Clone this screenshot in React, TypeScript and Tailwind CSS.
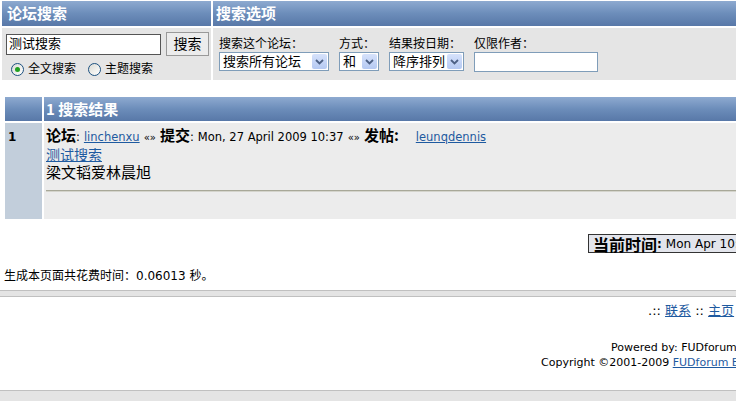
import React from "react";

const cjk = "font-['Tahoma','DejaVu_Sans','Noto_Sans_CJK_SC',sans-serif]";
const head = "bg-gradient-to-b from-[#8eaad0] via-[#6c8dba] to-[#5878a8] text-white font-bold text-[15px] font-['Noto_Sans_CJK_SC',serif]";

function Arrow() {
  return (
    <span className="flex h-[15px] w-[15px] items-center justify-center rounded-[2px] bg-gradient-to-b from-[#d6e2fb] to-[#b5c9f2]">
      <svg width="9" height="6" viewBox="0 0 9 6">
        <path d="M1 1l3.5 3.5L8 1" fill="none" stroke="#4d6185" strokeWidth="1.8" />
      </svg>
    </span>
  );
}

function Select({ label, w }: { label: string; w: string }) {
  return (
    <div className={`flex h-[19px] items-center justify-between border border-[#7f9db9] bg-white pl-[3px] pr-[1px] text-[13px] ${w}`}>
      <span>{label}</span>
      <Arrow />
    </div>
  );
}

function Radio({ on }: { on?: boolean }) {
  return (
    <span className="flex h-[13px] w-[13px] items-center justify-center rounded-full border border-[#1c5180] bg-gradient-to-br from-[#dcdcd5] to-white">
      {on && <span className="h-[5px] w-[5px] rounded-full bg-[#21a121]" />}
    </span>
  );
}

export default function App() {
  return (
    <div className={`h-[401px] w-[736px] overflow-hidden bg-white text-black ${cjk}`}>
      <div className="w-[840px]">
        {/* 搜索 */}
        <div className="grid grid-cols-[209px_1fr] gap-x-[2px] gap-y-[2px] pl-[2px] pt-[1px]">
          <div className={`${head} flex h-[25px] items-center pl-[5px]`}>论坛搜索</div>
          <div className={`${head} flex h-[25px] items-center pl-[3px]`}>搜索选项</div>
          <div className="h-[52px] bg-[#e5e5e5] pl-[4px] pt-[4px]">
            <div className="flex items-center gap-[5px]">
              <div className="flex h-[21px] w-[155px] items-center border border-[#555] bg-white pl-[2px] text-[13px]">测试搜索</div>
              <div className="flex h-[24px] w-[43px] items-center justify-center border border-[#999] bg-[#ececec] text-[14px]">搜索</div>
            </div>
            <div className="mt-[4px] flex items-center gap-[4px] pl-[5px] text-[12px]">
              <Radio on />
              <span>全文搜索</span>
              <span className="w-[4px]" />
              <Radio />
              <span>主题搜索</span>
            </div>
          </div>
          <div className="flex h-[52px] gap-[10px] bg-[#e5e5e5] pl-[6px] pt-[8px] text-[12px]">
            <div>
              <div className="leading-[16px]">搜索这个论坛：</div>
              <Select label="搜索所有论坛" w="w-[110px]" />
            </div>
            <div>
              <div className="leading-[16px]">方式：</div>
              <Select label="和" w="w-[40px]" />
            </div>
            <div>
              <div className="leading-[16px]">结果按日期：</div>
              <Select label="降序排列" w="w-[75px]" />
            </div>
            <div>
              <div className="leading-[16px]">仅限作者：</div>
              <div className="h-[20px] w-[124px] border border-[#7f9db9] bg-white" />
            </div>
          </div>
        </div>

        {/* 结果 */}
        <div className="mt-[17px] grid grid-cols-[37px_1fr] gap-[2px] pl-[5px]">
          <div className={`${head} h-[24px]`} />
          <div className={`${head} flex h-[24px] items-center pl-[2px] text-[14px]`}>1 搜索结果</div>
          <div className="h-[96px] bg-[#c2cedb] pl-[3px] pt-[5px] text-[12px] font-bold">1</div>
          <div className="h-[96px] bg-[#ececec] pl-[2px] pt-[3px] text-[11.5px]">
            <div className="flex items-baseline leading-[18px]">
              <b className="text-[15px] font-['Noto_Sans_CJK_SC',serif]">论坛</b>: <a className="ml-[4px] text-[#1e5aa0] underline">linchenxu</a>
              <span className="mx-[4px] text-[10px]">«»</span>
              <b className="text-[15px] font-['Noto_Sans_CJK_SC',serif]">提交</b>: <span className="ml-[4px]">Mon, 27 April 2009 10:37</span>
              <span className="mx-[4px] text-[10px]">«»</span>
              <b className="text-[15px] font-['Noto_Sans_CJK_SC',serif]">发帖:</b>
              <a className="ml-[17px] text-[#1e5aa0] underline">leunqdennis</a>
            </div>
            <a className="block text-[14px] leading-[17px] text-[#1e5aa0] underline">测试搜索</a>
            <div className="text-[15px] leading-[18px]">梁文韬爱林晨旭</div>
            <div className="mt-[8px] border-t border-b border-t-[#a8a898] border-b-[#d4d4cc]" />
          </div>
        </div>

        <div className="mt-[15px] flex pl-[588px]">
          <div className="flex h-[19px] items-center whitespace-nowrap border border-[#333] bg-[#e3e5ec] pl-[4px] pr-[20px] text-[12px]">
            <b className="text-[16px] font-['Noto_Sans_CJK_SC',serif]">当前时间</b>
            <b>:</b>
            <span className="ml-[4px]">Mon Apr 10:37:22 2009</span>
          </div>
        </div>

        <div className="mt-[14px] pl-[4px] text-[12px]">生成本页面共花费时间：0.06013 秒。</div>

        <div className="mt-[5px] h-[7px] w-[736px] border-y border-[#c0c0c0] bg-[#e4e4e4]" />

        <div className="whitespace-nowrap pl-[648px] pt-[4px] text-[13px]">
          .:: <a className="text-[#1e5aa0] underline">联系</a> :: <a className="text-[#1e5aa0] underline">主页</a> ::
        </div>

        <div className="whitespace-nowrap pl-[541px] pt-[19px] text-[11px] leading-[15px]">
          <div className="pl-[70px]">Powered by: FUDforum 2.8.0</div>
          <div>
            Copyright ©2001-2009 <a className="text-[#1e5aa0] underline">FUDforum Bulletin Board Software</a>
          </div>
        </div>

        <div className="mt-[20px] h-[12px] w-[736px] border-t border-[#c0c0c0] bg-[#e4e4e4]" />
      </div>
    </div>
  );
}
